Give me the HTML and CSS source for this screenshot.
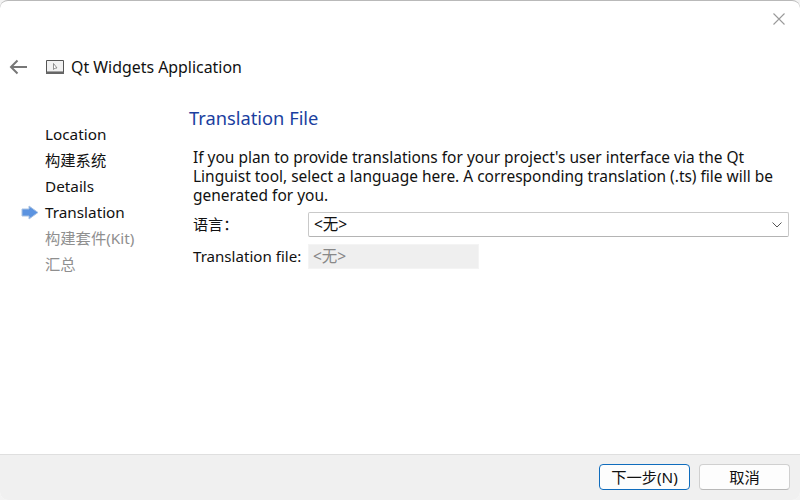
FILE: index.html
```html
<!DOCTYPE html>
<html lang="zh-CN">
<head>
<meta charset="utf-8">
<title>Qt Widgets Application</title>
<link rel="stylesheet" href="styles.css">
</head>
<body>
<div class="window">
  <div class="titlebar">
    <svg class="close" width="12" height="12" viewBox="0 0 12 12"><path d="M.5 .5L11.5 11.5M11.5 .5L.5 11.5" stroke="#9a9a9a" stroke-width="1.1" fill="none"/></svg>
  </div>
  <div class="header">
    <svg class="back" width="18" height="16" viewBox="0 0 18 16"><path d="M18 8H2M8.5 1.5L2 8L8.5 14.5" stroke="#777" stroke-width="2" fill="none"/></svg>
    <svg class="appicon" width="18" height="14" viewBox="0 0 18 14"><path d="M.5 .5H17.5V12H.5Z" fill="#f1f1f1" stroke="#555" stroke-width="1"/><path d="M0 13H18" stroke="#666" stroke-width="2"/><path d="M7.5 3.5V9.5L9 8.2L11 8Z" fill="#fff" stroke="#777" stroke-width=".8"/></svg>
    <span class="apptitle">Qt Widgets Application</span>
  </div>
  <div class="main">
    <ul class="steps">
      <li class="step">Location</li>
      <li class="step">构建系统</li>
      <li class="step">Details</li>
      <li class="step current"><svg class="arrow" width="18" height="15" viewBox="0 0 18 15"><path d="M1 4H8V1L17 7.5L8 14V11H1Z" fill="#5b93e0" stroke="#a9c2e2" stroke-width="1"/></svg>Translation</li>
      <li class="step muted">构建套件(Kit)</li>
      <li class="step muted">汇总</li>
    </ul>
    <div class="content">
      <h1 class="heading">Translation File</h1>
      <p class="desc">If you plan to provide translations for your project's user interface via the Qt Linguist tool, select a language here. A corresponding translation (.ts) file will be generated for you.</p>
      <div class="form">
        <span class="label">语言：</span>
        <div class="combo"><span>&lt;无&gt;</span>
          <svg width="10" height="6" viewBox="0 0 10 6"><path d="M.5 .5L5 5L9.5 .5" stroke="#555" stroke-width="1" fill="none"/></svg>
        </div>
        <span class="label">Translation file:</span>
        <div class="readonly">&lt;无&gt;</div>
      </div>
    </div>
  </div>
  <div class="footer">
    <button class="btn primary">下一步(N)</button>
    <button class="btn">取消</button>
  </div>
</div>
</body>
</html>
```
FILE: styles.css
```css
* { box-sizing: border-box; }
html, body { margin: 0; height: 100%; background: #f3f3f3; }
body {
  font-family: "Noto Sans", "Noto Sans CJK SC", sans-serif;
  font-size: 15px;
  color: #111;
}
.window {
  width: 800px;
  height: 500px;
  background: #fff;
  border-top: 1px solid #b9b9b9;
  border-radius: 8px;
  overflow: hidden;
  display: flex;
  flex-direction: column;
}
.titlebar { height: 49px; display: flex; justify-content: flex-end; padding: 12px 15px 0 0; flex: none; }
.close { display: block; }
.header { height: 34px; display: flex; align-items: center; padding-left: 9px; flex: none; }
.appicon { margin-left: 19px; margin-right: 7px; }
.apptitle { font-size: 15.9px; }
.main { flex: 1; display: flex; min-height: 0; padding-top: 21px; }
.steps { list-style: none; margin: 0; padding: 16px 0 0 0; width: 189px; flex: none; }
.step { height: 26px; line-height: 26px; padding-left: 45px; position: relative; white-space: nowrap; font-size: 15.3px; }
.arrow { position: absolute; left: 21px; top: 6px; }
.muted { color: #8f8f8f; }
.content { flex: 1; min-width: 0; padding-right: 11px; }
.heading { margin: 0; font-size: 18.3px; font-weight: 400; color: #1b3fa0; line-height: 26px; height: 43px; }
.desc { margin: 0 0 0 4px; line-height: 19px; width: 600px; font-size: 15.48px; }
.form { display: grid; grid-template-columns: 115px 1fr; row-gap: 7px; margin: 7px 0 0 4px; align-items: center; }
.label { font-size: 15.1px; line-height: 23px; height: 24px; }
.combo {
  height: 25px; border: 1px solid #c9c9c9; border-bottom-color: #b4b4b4; border-radius: 2px;
  display: flex; justify-content: space-between; align-items: center; padding: 0 6px 0 5px;
  font-size: 15.5px; line-height: 21px;
}
.readonly {
  height: 25px; width: 171px; background: #efefef; border: 1px solid #f4f4f4; color: #888;
  line-height: 22px; padding-left: 4px; font-size: 15.5px;
}
.footer {
  height: 46px; flex: none; background: #f0f0f0; border-top: 1px solid #dfdfdf;
  display: flex; justify-content: flex-end; align-items: flex-start; gap: 9px; padding: 9px 10px 0 0;
}
.btn {
  width: 91px; height: 26px; font: inherit; font-size: 15.3px; color: #111; background: #fdfdfd;
  border: 1px solid #d0d0d0; border-bottom-color: #b8b8b8; border-radius: 4px; padding: 0 0 2px;
}
.primary { border: 1.5px solid #0f6cbd; }
```
